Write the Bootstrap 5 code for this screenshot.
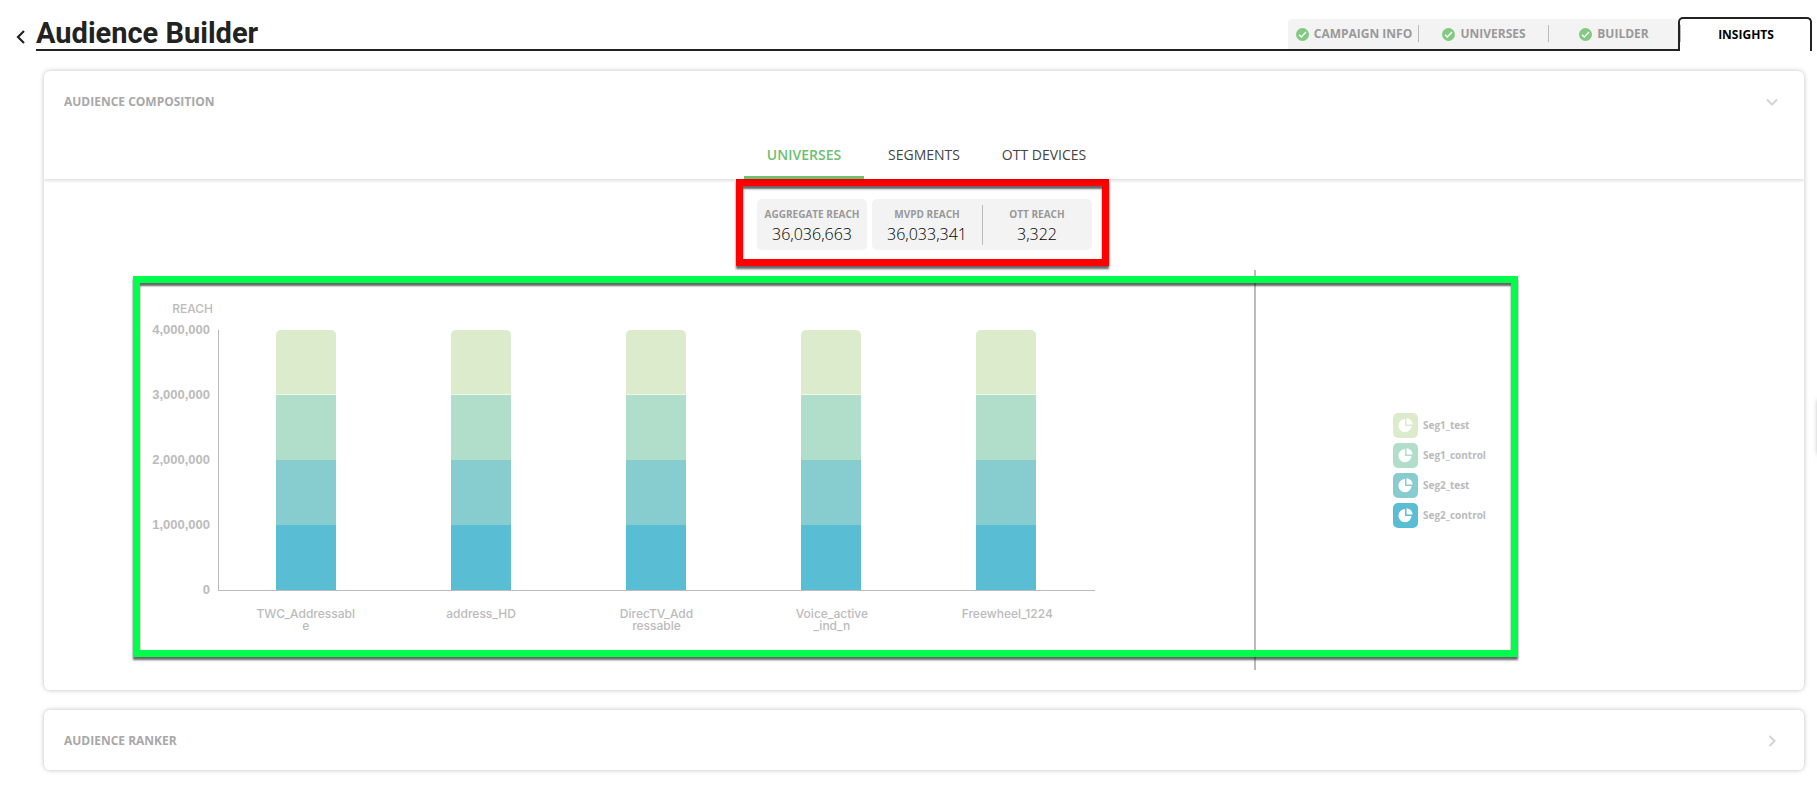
<!DOCTYPE html>
<html lang="en">
<head>
<meta charset="utf-8">
<meta name="viewport" content="width=device-width, initial-scale=1">
<title>Audience Builder</title>
<link href="https://cdn.jsdelivr.net/npm/bootstrap@5.3.0/dist/css/bootstrap.min.css" rel="stylesheet">
<style>
  body { font-family: "Open Sans", sans-serif; background: #fff; color: #222; overflow-x: hidden; }
  button { font-family: inherit; }

  /* page header */
  .page-head { padding: 17px 5px 0 0; }
  .back-link { width: 36px; padding: 13px 0 0 15px; color: #222; }
  .page-title { font: 700 29px/32px Roboto, sans-serif; border-bottom: 2px solid #222; color: #222; }
  .step-tab { width: 130px; height: 32px; background: #f3f3f3; border: 0; border-bottom: 2px solid #222; color: #999; font-size: 12px; font-weight: 700; gap: 5px; padding: 0 0 0 2px; position: relative; white-space: nowrap; }
  .step-tab:first-child { border-top-left-radius: 4px; }
  .step-tab:not(:nth-child(3)):not(.active)::after, .step-tab.active::before { content: ""; position: absolute; right: -1px; top: 6px; width: 1px; height: 17px; background: #bbb; z-index: 1; }
  .step-tab.active { width: 134px; height: 34px; background: #fff; color: #000; border: 2px solid #222; border-bottom: 0; border-radius: 5px 5px 0 0; }
  .step-tab.active::before { left: 0; }

  /* panels */
  .panels { padding: 20px 13px 24px 44px; gap: 20px; }
  .panel { border-radius: 6px; box-shadow: 0 0 5px rgba(0, 0, 0, .25); background: #fff; isolation: isolate; }
  .panel-toggle { height: 60px; padding: 2px 25px 0 20px; border: 0; background: none; color: #a8a8a8; font-size: 12px; font-weight: 700; }
  .view-tabs { box-shadow: 0 2px 3px rgba(0, 0, 0, .12); clip-path: inset(0 0 -6px 0); }
  .view-tab { width: 120px; height: 48px; border: 0; border-bottom: 3px solid transparent; background: none; color: #444; font-size: 14px; font-weight: 500; padding: 2px 0 0; }
  .view-tab.active { color: #6cc070; border-color: #6cc070; font-weight: 600; }

  /* highlighted frames */
  .frame-red { border: 7px solid #f00; padding: 13px 10px 9px 14px; gap: 5px; margin-right: 3px; }
  .frame-green { border: 7px solid #00ff4c; margin: 10px 286px 33px 89px; }
  .frame-red, .frame-green { box-shadow: 0 3px 2px rgba(0, 0, 0, .6), inset 0 3px 2px rgba(0, 0, 0, .6); }

  .stat-box { background: #f3f3f3; border-radius: 5px; height: 51px; }
  .stat { width: 110px; text-align: center; padding-top: 8px; position: relative; }
  .stat + .stat::before { content: ""; position: absolute; left: 0; top: 6px; width: 1px; height: 40px; background: #bbb; }
  .stat dt { font-size: 10px; line-height: 14px; font-weight: 700; color: #999; }
  .stat dd { font-size: 16px; line-height: 26px; font-weight: 300; color: #000; margin: 0; }

  /* stacked bar chart */
  .chart { padding: 19px 159px 18px 0; color: #bbb; font: 600 12px/14px Inter, sans-serif; }
  .axis-title { width: 73px; text-align: right; font-weight: 500; }
  .scale-y { width: 78px; padding-right: 8px; text-align: right; margin: -7px 0; height: 274px; font: 700 13px/14px "Liberation Sans", sans-serif; }
  .plot-row { padding-top: 14px; }
  .plot { height: 261px; border-left: 1px solid #bbb; border-bottom: 1px solid #bbb; padding-right: 2px; }
  .stack { width: 60px; height: 260px; border-radius: 5px 5px 0 0; overflow: hidden; }
  .names { margin-left: 78px; padding-top: 17px; text-align: center; line-height: 12px; font-weight: 500; }
  .s1 { background: #dcebcb; }
  .s2 { background: #b1deca; }
  .s3 { background: #87cdcf; }
  .s4 { background: #59bdd3; }
  .stack .s1 { box-shadow: inset 0 -1px #f0f7e6; }

  .legend-side { width: 257px; position: relative; padding: 8px 0 0 139px; gap: 5px; z-index: -1; }
  .legend-side::before { content: ""; position: absolute; left: 0; top: -13px; bottom: -20px; width: 2px; background: #bbb; }
  .legend-key { font-size: 10px; font-weight: 700; color: #bbb; gap: 5px; }
  .swatch { width: 25px; height: 25px; border-radius: 5px; }

  /* drawer handle tucked behind the right edge of the window */
  .drawer-edge { position: fixed; right: -21px; top: 400px; width: 20px; height: 54px; box-shadow: 0 0 5px rgba(0, 0, 0, .35); }
</style>
</head>
<body>
<svg class="d-none" xmlns="http://www.w3.org/2000/svg">
  <symbol id="tick" viewBox="0 0 13 13"><circle cx="6.5" cy="6.5" r="6.5" fill="#82c982"/><path d="M3 6.700l2.300 2.300 4.700-4.900" fill="none" stroke="#fff" stroke-width="1.400"/></symbol>
  <symbol id="pie" viewBox="0 0 25 25"><path d="M12 6A6.600 6.600 0 1 0 18.600 13H12Z" fill="#fff"/><path d="M13.500 5.200A6.500 6.500 0 0 1 19.700 11.500H13.500Z" fill="#fff"/></symbol>
</svg>

<header class="page-head d-flex align-items-end">
  <a href="#" class="back-link align-self-start" aria-label="Back"><svg class="d-block" width="11" height="14" viewBox="0 0 11 14"><path d="M9 1L3 7l6 6" fill="none" stroke="currentColor" stroke-width="2.200"/></svg></a>
  <h1 class="page-title flex-grow-1 m-0">Audience Builder</h1>
  <nav class="d-flex align-items-end" aria-label="Steps">
    <button class="step-tab d-flex align-items-center justify-content-center"><svg width="13" height="13"><use href="#tick"/></svg>CAMPAIGN INFO</button>
    <button class="step-tab d-flex align-items-center justify-content-center"><svg width="13" height="13"><use href="#tick"/></svg>UNIVERSES</button>
    <button class="step-tab d-flex align-items-center justify-content-center"><svg width="13" height="13"><use href="#tick"/></svg>BUILDER</button>
    <button class="step-tab active d-flex align-items-center justify-content-center">INSIGHTS</button>
  </nav>
</header>

<main class="panels d-flex flex-column">
  <section class="panel">
    <button class="panel-toggle d-flex w-100 align-items-center justify-content-between" aria-expanded="true">AUDIENCE COMPOSITION
      <svg width="14" height="14" viewBox="0 0 14 14"><path d="M2 4.500l5 5 5-5" fill="none" stroke="#d4d4d4" stroke-width="2"/></svg>
    </button>
    <div class="view-tabs d-flex justify-content-center">
      <button class="view-tab active">UNIVERSES</button>
      <button class="view-tab">SEGMENTS</button>
      <button class="view-tab">OTT DEVICES</button>
    </div>

    <div class="d-flex justify-content-center">
      <div class="frame-red d-flex">
        <dl class="stat-box d-flex m-0">
          <div class="stat"><dt>AGGREGATE REACH</dt><dd>36,036,663</dd></div>
        </dl>
        <dl class="stat-box d-flex m-0">
          <div class="stat"><dt>MVPD REACH</dt><dd>36,033,341</dd></div>
          <div class="stat"><dt>OTT REACH</dt><dd>3,322</dd></div>
        </dl>
      </div>
    </div>

    <div class="frame-green d-flex">
      <div class="chart flex-grow-1">
        <div class="axis-title">REACH</div>
        <div class="plot-row d-flex">
          <div class="scale-y d-flex flex-column justify-content-between">
            <span>4,000,000</span><span>3,000,000</span><span>2,000,000</span><span>1,000,000</span><span>0</span>
          </div>
          <div class="plot flex-grow-1 d-flex justify-content-around">
            <div class="stack d-flex flex-column"><div class="s1 flex-fill"></div><div class="s2 flex-fill"></div><div class="s3 flex-fill"></div><div class="s4 flex-fill"></div></div>
            <div class="stack d-flex flex-column"><div class="s1 flex-fill"></div><div class="s2 flex-fill"></div><div class="s3 flex-fill"></div><div class="s4 flex-fill"></div></div>
            <div class="stack d-flex flex-column"><div class="s1 flex-fill"></div><div class="s2 flex-fill"></div><div class="s3 flex-fill"></div><div class="s4 flex-fill"></div></div>
            <div class="stack d-flex flex-column"><div class="s1 flex-fill"></div><div class="s2 flex-fill"></div><div class="s3 flex-fill"></div><div class="s4 flex-fill"></div></div>
            <div class="stack d-flex flex-column"><div class="s1 flex-fill"></div><div class="s2 flex-fill"></div><div class="s3 flex-fill"></div><div class="s4 flex-fill"></div></div>
          </div>
        </div>
        <div class="names row row-cols-5 g-0">
          <div>TWC_Addressabl<br>e</div>
          <div>address_HD</div>
          <div>DirecTV_Add<br>ressable</div>
          <div>Voice_active<br>_ind_n</div>
          <div>Freewheel_1224</div>
        </div>
      </div>
      <div class="legend-side d-flex flex-column justify-content-center">
        <div class="legend-key d-flex align-items-center"><svg class="swatch s1"><use href="#pie"/></svg>Seg1_test</div>
        <div class="legend-key d-flex align-items-center"><svg class="swatch s2"><use href="#pie"/></svg>Seg1_control</div>
        <div class="legend-key d-flex align-items-center"><svg class="swatch s3"><use href="#pie"/></svg>Seg2_test</div>
        <div class="legend-key d-flex align-items-center"><svg class="swatch s4"><use href="#pie"/></svg>Seg2_control</div>
      </div>
    </div>
  </section>

  <section class="panel">
    <button class="panel-toggle d-flex w-100 align-items-center justify-content-between" aria-expanded="false">AUDIENCE RANKER
      <svg width="14" height="14" viewBox="0 0 14 14"><path d="M4.500 2l5 5-5 5" fill="none" stroke="#d4d4d4" stroke-width="2"/></svg>
    </button>
  </section>
</main>
<div class="drawer-edge"></div>
<script src="https://cdn.jsdelivr.net/npm/bootstrap@5.3.0/dist/js/bootstrap.bundle.min.js"></script>
</body>
</html>
